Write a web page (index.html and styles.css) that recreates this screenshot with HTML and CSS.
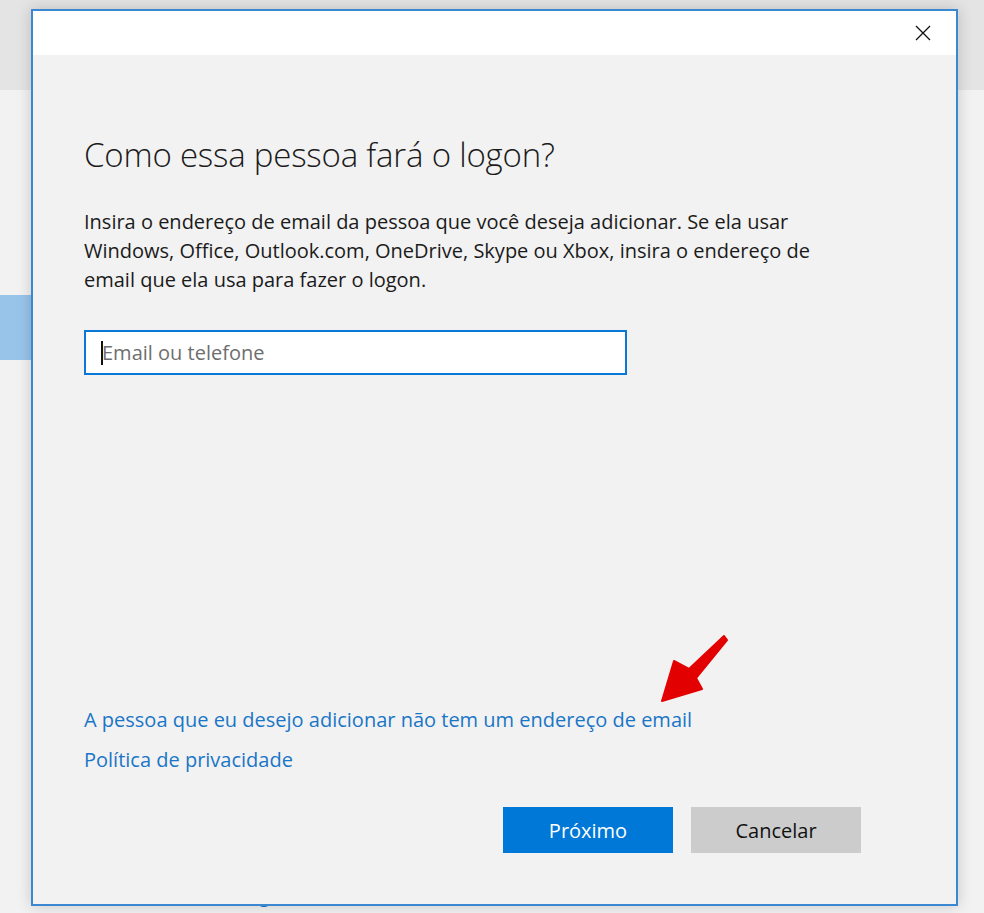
FILE: index.html
```html
<!DOCTYPE html>
<html lang="pt-BR">
<head>
<meta charset="utf-8">
<title>Como essa pessoa fará o logon?</title>
<link rel="stylesheet" href="styles.css">
</head>
<body>
<div class="desktop">
  <div class="bg-top"></div>
  <div class="bg-main">
    <div class="side-item"></div>
    <div class="peek">g</div>
  </div>

  <div class="dialog">
    <div class="titlebar">
      <button class="close" aria-label="Fechar">
        <svg width="16" height="16" viewBox="0 0 16 16"><path d="M1 1 L15 15 M15 1 L1 15" stroke="#111" stroke-width="1.3" fill="none"/></svg>
      </button>
    </div>
    <div class="content">
      <h1 class="title">Como essa pessoa fará o logon?</h1>
      <p class="desc">Insira o endereço de email da pessoa que você deseja adicionar. Se ela usar Windows, Office, Outlook.com, OneDrive, Skype ou Xbox, insira o endereço de email que ela usa para fazer o logon.</p>
      <div class="field"><span class="caret"></span><span class="placeholder">Email ou telefone</span></div>
      <div class="spacer"></div>
      <div class="links">
        <a class="link" href="#">A pessoa que eu desejo adicionar não tem um endereço de email</a>
        <a class="link" href="#">Política de privacidade</a>
      </div>
      <div class="buttons">
        <button class="btn primary">Próximo</button>
        <button class="btn secondary">Cancelar</button>
      </div>
    </div>
    <svg class="arrow" width="80" height="80" viewBox="0 0 80 80">
      <path d="M7 71 L19 31 L34 39 L69 6 L72 10 L41 48 L47 59 Z" fill="#e30000" stroke="#e30000" stroke-width="2" stroke-linejoin="round"/>
    </svg>
  </div>
</div>
</body>
</html>
```
FILE: styles.css
```css
* { box-sizing: border-box; }
html, body { margin: 0; padding: 0; }
body {
  width: 984px;
  height: 913px;
  overflow: hidden;
  background: #f2f2f2;
  font-family: "Open Sans", "Noto Sans", sans-serif;
}
.desktop {
  position: relative;
  width: 984px;
  height: 913px;
}
.bg-top {
  height: 90px;
  background: #e4e4e4;
}
.bg-main {
  height: 823px;
  background: #f2f2f2;
  padding-top: 205px;
  position: relative;
}
.side-item {
  width: 31px;
  height: 65px;
  background: #99c4ea;
}
.peek {
  position: absolute;
  left: 259px;
  top: 795px;
  color: #1a78c2;
  font-size: 19px;
  line-height: 22px;
}
.dialog {
  position: absolute;
  left: 31px;
  top: 9px;
  width: 927px;
  height: 897px;
  border: 2px solid #3a88d2;
  background: #f2f2f2;
  display: flex;
  flex-direction: column;
  box-shadow: 0 0 14px rgba(0,0,0,0.18);
}
.titlebar {
  height: 44px;
  background: #ffffff;
  display: flex;
  justify-content: flex-end;
  align-items: flex-start;
  padding: 14px 25px 0 0;
}
.close {
  border: 0;
  background: transparent;
  padding: 0;
  width: 16px;
  height: 16px;
  display: block;
}
.close svg { display: block; }
.content {
  flex: 1;
  display: flex;
  flex-direction: column;
  padding: 78px 0 51px 51px;
}
.title {
  margin: 0;
  font-weight: 300;
  font-size: 33px;
  line-height: 44px;
  color: #1b1b1b;
  letter-spacing: -0.2px;
}
.desc {
  margin: 30px 0 0;
  width: 745px;
  font-size: 20px;
  line-height: 29px;
  color: #1b1b1b;
}
.field {
  margin-top: 36px;
  width: 543px;
  height: 45px;
  border: 2px solid #0a78d7;
  background: #fff;
  display: flex;
  align-items: center;
  padding-left: 15px;
}
.caret {
  width: 2px;
  height: 24px;
  background: #111;
}
.placeholder {
  font-size: 20px;
  color: #6e6e6e;
  margin-left: -1px;
}
.spacer { flex: 1; }
.links {
  display: flex;
  flex-direction: column;
  align-items: flex-start;
  gap: 12px;
}
.link {
  font-size: 20px;
  line-height: 28px;
  color: #1a76c6;
  text-decoration: none;
}
.buttons {
  margin-top: 33px;
  display: flex;
  gap: 18px;
  padding-left: 419px;
}
.btn {
  width: 170px;
  height: 46px;
  border: 0;
  font-family: inherit;
  font-size: 20px;
}
.primary { background: #0078d7; color: #fff; }
.secondary { background: #cccccc; color: #111; }
.arrow {
  position: absolute;
  left: 622px;
  top: 619px;
}
```
